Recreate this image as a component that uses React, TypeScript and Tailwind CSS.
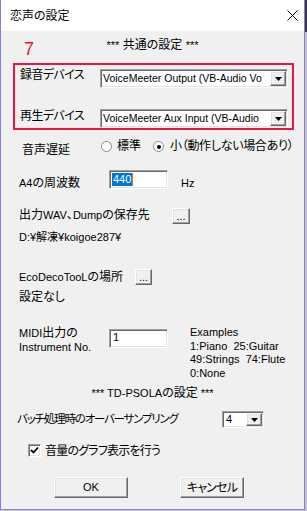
import React from 'react';

const font = "font-['Liberation_Sans','Noto_Sans_CJK_JP',sans-serif] [font-feature-settings:'palt']";
const sunken =
  'border border-t-[#a0a0a0] border-l-[#a0a0a0] border-r-white border-b-white shadow-[inset_1px_1px_0_#696969,inset_-1px_-1px_0_#e3e3e3] bg-white';
const raised =
  'border border-t-white border-l-white border-r-[#696969] border-b-[#696969] shadow-[inset_-1px_-1px_0_#a0a0a0,inset_1px_1px_0_#e3e3e3] bg-[#f0f0f0]';

function Arrow() {
  return (
    <div className={`${raised} w-[16px] h-full flex items-center justify-center shrink-0`}>
      <svg width="7" height="4" viewBox="0 0 7 4">
        <path d="M0 0h7L3.5 4z" fill="#000" />
      </svg>
    </div>
  );
}

function Combo({ text, w }: { text: string; w: string }) {
  return (
    <div className={`${sunken} ${w} h-[19px] flex items-stretch p-[1px] pl-[2px]`}>
      <div className="flex-1 min-w-0 whitespace-nowrap text-[10.5px] leading-[15px]">{text}</div>
      <Arrow />
    </div>
  );
}

function Radio({ on }: { on?: boolean }) {
  return (
    <div className="w-[11px] h-[11px] rounded-full border border-[#8a8a8a] bg-white flex items-center justify-center shrink-0">
      {on && <div className="w-[4px] h-[4px] rounded-full bg-black" />}
    </div>
  );
}

function Dots({ w }: { w: string }) {
  return (
    <div className={`${raised} ${w} h-[16px] flex items-end justify-center text-[11px] leading-[12px] pb-[1px]`}>...</div>
  );
}

export default function App() {
  return (
    <div className={`w-[307px] h-[511px] flex bg-[#c8c8c8] text-black text-[12px] ${font}`}>
      <div className="w-[305px] h-[510px] flex flex-col bg-[#f0f0f0] border-l border-r border-b border-[#7f7fe6]">
        {/* タイトルバー */}
        <div className="h-[31px] bg-white flex items-center justify-between pl-[9px] pr-[6px] shrink-0">
          <span className="text-[12px] leading-[12px]">恋声の設定</span>
          <svg width="11" height="11" viewBox="0 0 11 11">
            <path d="M0.5 0.5L10.5 10.5M10.5 0.5L0.5 10.5" stroke="#000" strokeWidth="1" />
          </svg>
        </div>

        {/* 見出し */}
        <div className="h-[32px] grid grid-cols-[1fr_auto_1fr] items-start shrink-0">
          <div className="pl-[23px] pt-[9px] text-[18px] leading-[18px] text-[#e8113c]">7</div>
          <div className="pt-[8px] leading-[12px]">
            <span className="text-[11px]">***</span> 共通の設定 <span className="text-[11px]">***</span>
          </div>
          <div />
        </div>

        {/* デバイス */}
        <div className="ml-[12px] w-[281px] h-[67px] border-2 border-[#e8173f] pt-[4px] shrink-0">
          <div className="flex items-start">
            <div className="w-[85px] pl-[5px] leading-[12px] tracking-[-0.6px]">録音デバイス</div>
            <Combo text="VoiceMeeter Output (VB-Audio Vo" w="w-[188px]" />
          </div>
          <div className="flex items-start mt-[21px]">
            <div className="w-[85px] pl-[5px] pt-[1px] leading-[12px] tracking-[-0.6px]">再生デバイス</div>
            <Combo text="VoiceMeeter Aux Input (VB-Audio" w="w-[188px]" />
          </div>
        </div>

        {/* 音声遅延 */}
        <div className="mt-[11px] flex items-start">
          <div className="ml-[21px] w-[79px] pt-[3px] leading-[12px]">音声遅延</div>
          <Radio />
          <div className="ml-[5px] leading-[11px]">標準</div>
          <div className="ml-[12px]">
            <Radio on />
          </div>
          <div className="ml-[6px] leading-[11px] tracking-[-0.3px]">小（動作しない場合あり）</div>
        </div>

        {/* A4 */}
        <div className="mt-[14px] flex items-start">
          <div className="ml-[18px] w-[90px] pt-[7px] leading-[12px]">
            <span className="text-[11px]">A4</span>の周波数
          </div>
          <div className={`${sunken} w-[59px] h-[19px] pl-[2px] pt-[2px] flex items-start`}>
            <span className="bg-[#0078d7] text-white text-[11px] leading-[13px] px-[1px]">440</span>
            <span className="w-[1px] h-[13px] bg-[#e07020]" />
          </div>
          <div className="ml-[13px] pt-[7px] text-[11px] leading-[12px]">Hz</div>
        </div>

        {/* 出力先 */}
        <div className="mt-[19px] flex items-start">
          <div className="ml-[18px] w-[153px] pt-[1px] leading-[12px]">
            出力<span className="text-[11px]">WAV</span>、<span className="text-[11px]">Dump</span>の保存先
          </div>
          <Dots w="w-[18px]" />
        </div>
        <div className="mt-[7px] ml-[18px] text-[11px] leading-[12px]">D:¥解凍¥koigoe287¥</div>

        {/* EcoDecoTooL */}
        <div className="mt-[26px] flex items-start">
          <div className="ml-[18px] w-[116px] pt-[2px] leading-[12px]">
            <span className="text-[11px]">EcoDecoTooL</span>の場所
          </div>
          <Dots w="w-[17px]" />
        </div>
        <div className="mt-[6px] ml-[18px] leading-[12px]">設定なし</div>

        {/* MIDI */}
        <div className="mt-[23px] flex items-start">
          <div className="ml-[18px] w-[90px] leading-[14px]">
            <div>
              <span className="text-[11px]">MIDI</span>出力の
            </div>
            <div className="text-[11px]">Instrument No.</div>
          </div>
          <div className={`${sunken} mt-[3px] w-[59px] h-[19px] pl-[3px] text-[11px] leading-[15px]`}>1</div>
          <div className="ml-[22px] text-[11px] leading-[13.5px] whitespace-pre">
            <div>Examples</div>
            <div>1:Piano  25:Guitar</div>
            <div>49:Strings  74:Flute</div>
            <div>0:None</div>
          </div>
        </div>

        {/* TD-PSOLA */}
        <div className="mt-[7px] text-center leading-[12px] text-[11px]">
          *** TD-PSOLA<span className="text-[12px]">の設定</span> ***
        </div>
        <div className="mt-[12px] flex items-start">
          <div className="ml-[16px] w-[205px] pt-[2px] leading-[12px] text-[11.5px] tracking-[-1.2px]">
            バッチ処理時のオーバーサンプリング
          </div>
          <div className={`${sunken} w-[42px] h-[17px] flex items-stretch p-[1px] pl-[3px]`}>
            <div className="flex-1 text-[11px] leading-[13px]">4</div>
            <Arrow />
          </div>
        </div>

        {/* チェックボックス */}
        <div className="mt-[16px] flex items-center">
          <div className={`${sunken} ml-[27px] w-[13px] h-[13px] flex items-center justify-center`}>
            <svg width="9" height="9" viewBox="0 0 9 9">
              <path d="M1 4l2.5 2.5L8 1.5" stroke="#000" strokeWidth="1.8" fill="none" />
            </svg>
          </div>
          <div className="ml-[4px] leading-[12px] tracking-[-0.8px]">音量のグラフ表示を行う</div>
        </div>

        {/* ボタン */}
        <div className="mt-[20px] flex items-start">
          <div className={`${raised} ml-[53px] w-[74px] h-[21px] flex items-center justify-center text-[11px]`}>OK</div>
          <div className={`${raised} ml-[52px] w-[64px] h-[21px] flex items-center justify-center tracking-[-0.8px]`}>
            キャンセル
          </div>
        </div>
      </div>
      <div className="w-[2px] h-full flex flex-col">
        <div className="h-[32px] bg-[#3a3a3a]" />
        <div className="flex-1 bg-[#c0c0c0]" />
      </div>
    </div>
  );
}
